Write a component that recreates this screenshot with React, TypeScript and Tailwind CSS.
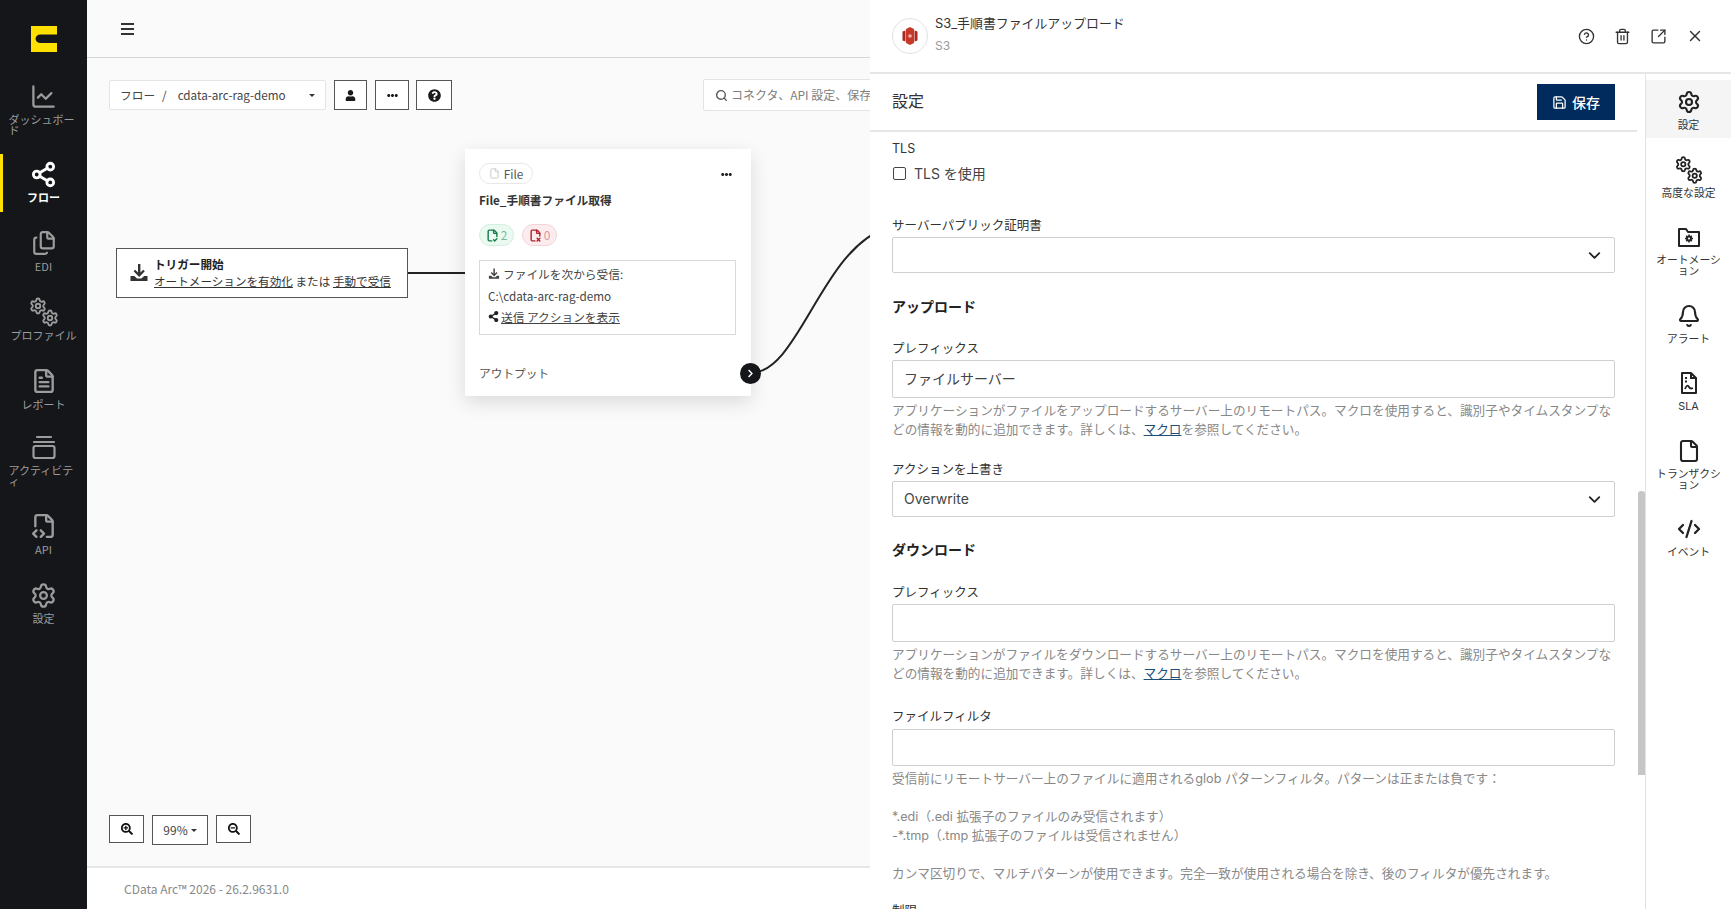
import {
  Bell,
  ChartLine,
  ChevronDown,
  CircleHelp,
  CodeXml,
  File,
  FileCheck2,
  FileCode2,
  FileText,
  FileX2,
  Files,
  Save,
  Search,
  Settings,
  Share2,
  SquareArrowOutUpRight,
  Trash2,
  X,
} from "lucide-react";
import type { ReactNode } from "react";
import {
  FaChevronRight,
  FaEllipsisH,
  FaQuestionCircle,
  FaSearchMinus,
  FaSearchPlus,
  FaShareAlt,
  FaUser,
} from "react-icons/fa";

function TwoGears({ className }: { className?: string }) {
  return (
    <span className={`relative block h-[30px] w-[30px] ${className ?? ""}`}>
      <Settings size={18} strokeWidth={2.5} className="absolute left-0 top-0" />
      <Settings size={18} strokeWidth={2.5} className="absolute bottom-0 right-0" />
    </span>
  );
}

function ActivityIcon() {
  return (
    <svg width="26" height="26" viewBox="0 0 26 26" fill="none" stroke="currentColor" strokeWidth="2.2">
      <path d="M6 3h14" strokeLinecap="round" />
      <path d="M3 8h20" strokeLinecap="round" />
      <rect x="2.5" y="12" width="21" height="12" rx="2" />
    </svg>
  );
}

function FolderGear() {
  return (
    <svg width="24" height="24" viewBox="0 0 24 24" fill="none" stroke="currentColor" strokeWidth="2">
      <path d="M2 4h7l2 3h11v14H2z" strokeLinejoin="round" />
      <path d="M12 9.500v8M8 13.500h8M9.200 10.700l5.600 5.600M14.800 10.700l-5.600 5.600" strokeWidth="1.500" />
      <circle cx="12" cy="13.500" r="3" fill="currentColor" stroke="none" />
      <circle cx="12" cy="13.500" r="1.100" fill="#fff" stroke="none" />
    </svg>
  );
}

function SlaFile() {
  return (
    <svg width="24" height="24" viewBox="0 0 24 24" fill="none" stroke="currentColor" strokeWidth="2">
      <path d="M5 2h9l5 5v15H5z" strokeLinejoin="round" />
      <path d="M14 2v5h5" />
      <path d="M8 7h2M8 10.500h2" />
      <path d="M8 18c1.500-4 3-4 4-2s2 2 4 1" strokeWidth="1.8" />
    </svg>
  );
}

function TrayDown({ size = 20 }: { size?: number }) {
  return (
    <svg width={size} height={size} viewBox="0 0 20 20" fill="currentColor">
      <path d="M9 1h2.400v8.500l2.800-2.800 1.600 1.600L10.200 14 4.600 8.300l1.600-1.600L9 9.500z" />
      <path d="M1.500 13h3.800l2.700 2.600h4.400L15.100 13h3.400v5H1.500z" />
    </svg>
  );
}

function S3Logo() {
  return (
    <svg width="16" height="20" viewBox="0 0 16 20">
      <path d="M4 3l4-2 4 2v14l-4 2-4-2z" fill="#c7382b" />
      <path d="M0.500 5.500l3-1v11l-3-1zM15.500 5.500l-3-1v11l3-1z" fill="#a8291e" />
      <circle cx="8" cy="10" r="1.800" fill="#eeb3ab" />
    </svg>
  );
}

const leftNav: { label: string; icon: ReactNode; active?: boolean; shift?: string }[] = [
  { label: "ダッシュボード", icon: <ChartLine size={27} strokeWidth={2} />, shift: "-mb-[2px]" },
  { label: "フロー", icon: <Share2 size={27} strokeWidth={2.5} />, active: true },
  { label: "EDI", icon: <Files size={26} strokeWidth={2} /> },
  { label: "プロファイル", icon: <TwoGears /> },
  { label: "レポート", icon: <FileText size={26} strokeWidth={2.2} />, shift: "-mb-[3px]" },
  { label: "アクティビティ", icon: <ActivityIcon />, shift: "-mb-[1px]" },
  { label: "API", icon: <FileCode2 size={26} strokeWidth={2.2} /> },
  { label: "設定", icon: <Settings size={27} strokeWidth={2} /> },
];

const rightNav: { label: string; icon: ReactNode; active?: boolean }[] = [
  { label: "設定", icon: <Settings size={24} strokeWidth={2.1} />, active: true },
  { label: "高度な設定", icon: <TwoGears className="scale-95" /> },
  { label: "オートメーション", icon: <FolderGear /> },
  { label: "アラート", icon: <Bell size={24} strokeWidth={2.1} /> },
  { label: "SLA", icon: <SlaFile /> },
  { label: "トランザクション", icon: <File size={24} strokeWidth={2.1} /> },
  { label: "イベント", icon: <CodeXml size={24} strokeWidth={2.3} /> },
];

function Sidebar() {
  return (
    <aside className="flex h-full w-[87px] shrink-0 flex-col bg-[#14161a] pt-[26px] text-[#9c9c9c]">
      <svg width="26" height="26" viewBox="0 0 26 26" className="mx-auto mb-[24px] shrink-0">
        <path d="M0 0h26v8.500H9.500c-3 0-5 2-5 4.250S6.500 17 9.500 17H26v9H0z" fill="#ffe000" />
      </svg>
      <nav className="flex flex-col gap-[11px]">
        {leftNav.map((item) => (
          <div
            key={item.label}
            className={`flex flex-col items-center border-l-[3px] pb-[9px] pt-[6px] ${
              item.active ? "border-[#ffe000] font-bold text-white" : "border-transparent"
            } ${item.shift ?? ""}`}
          >
            <span className="-ml-[3px] flex h-7 items-center justify-center">{item.icon}</span>
            <span className="-ml-[3px] mt-[4px] w-fit max-w-[70px] break-all text-[11px] leading-[11px]">{item.label}</span>
          </div>
        ))}
      </nav>
    </aside>
  );
}

function Toolbar() {
  return (
    <div className="flex h-[30px] items-center">
      <div className="flex h-[30px] w-[217px] items-center rounded-[2px] border border-[#e4e4e4] bg-white pl-[10px] pr-[10px] text-[11.700px] text-[#444]">
        <span>フロー</span>
        <span className="ml-[7px]">/</span>
        <span className="ml-[11px] flex-1">cdata-arc-rag-demo</span>
        <span className="h-0 w-0 border-x-[3px] border-t-[3px] border-x-transparent border-t-[#333]" />
      </div>
      <button className="ml-[8px] flex h-[30px] w-[33px] items-center justify-center border border-[#555] bg-white text-[#1a1a1a]">
        <FaUser size={11} />
      </button>
      <button className="ml-[8px] flex h-[30px] w-[34px] items-center justify-center border border-[#555] bg-white text-[#1a1a1a]">
        <FaEllipsisH size={11} />
      </button>
      <button className="ml-[7px] flex h-[30px] w-[36px] items-center justify-center border border-[#555] bg-white text-[#1a1a1a]">
        <FaQuestionCircle size={13} />
      </button>
      <div className="ml-[251px] flex h-[32px] w-[330px] shrink-0 items-center rounded-[2px] border border-[#e4e4e4] bg-white pl-[11px] text-[12px] text-[#808080]">
        <Search size={13} strokeWidth={2.6} className="mr-[3px] text-[#555]" />
        コネクタ、API 設定、保存されたフローを検索
      </div>
    </div>
  );
}

function TriggerNode() {
  return (
    <div className="absolute left-[29px] top-[190px] flex h-[50px] w-[292px] items-center border border-[#555] bg-white pl-[12px] text-[11.600px] text-[#333]">
      <TrayDown size={20} />
      <div className="ml-[5px] flex flex-col leading-[17px]">
        <span className="font-bold text-[#222]">トリガー開始</span>
        <span>
          <span className="underline">オートメーションを有効化</span> または <span className="underline">手動で受信</span>
        </span>
      </div>
    </div>
  );
}

function FileNode() {
  return (
    <div className="absolute left-[378px] top-[91px] flex h-[247px] w-[286px] flex-col bg-white pl-[14px] pr-[14px] pt-[14px] text-[11.700px] text-[#444] shadow-[0_6px_18px_rgba(0,0,0,0.13)]">
      <div className="flex items-center justify-between">
        <span className="flex h-[21px] w-[54px] items-center justify-center gap-[4px] rounded-full border border-[#e8e8e8] text-[#555]">
          <File size={11} className="text-[#c8c8c8]" />
          File
        </span>
        <FaEllipsisH size={11} className="mr-[5px] translate-y-[1px] text-[#222]" />
      </div>
      <div className="mt-[7px] font-bold leading-[18px] text-[#333]">File_手順書ファイル取得</div>
      <div className="mt-[15px] flex gap-[8px] text-[12px]">
        <span className="flex h-[22px] w-[35px] items-center justify-center gap-[2px] rounded-full border border-[#d5eee0] bg-[#eafaf1] text-[#7fb89a]">
          <FileCheck2 size={13} strokeWidth={2.6} className="text-[#147a46]" />2
        </span>
        <span className="flex h-[22px] w-[35px] items-center justify-center gap-[2px] rounded-full border border-[#f2d5d8] bg-[#fcecee] text-[#d59aa0]">
          <FileX2 size={13} strokeWidth={2.6} className="text-[#b3202f]" />0
        </span>
      </div>
      <div className="mt-[14px] flex h-[75px] w-[257px] flex-col gap-[2.500px] border border-[#d9d9d9] pl-[8px] pt-[3px] leading-[19px]">
        <span className="flex items-center gap-[3px]">
          <TrayDown size={12} />
          ファイルを次から受信:
        </span>
        <span>C:\cdata-arc-rag-demo</span>
        <span className="flex items-center gap-[2px]">
          <FaShareAlt size={11} className="text-[#222]" />
          <span className="underline">送信 アクションを表示</span>
        </span>
      </div>
      <div className="mt-[29px] leading-[18px] text-[#555]">アウトプット</div>
      <span className="absolute -right-[10px] bottom-[12px] flex h-[21px] w-[21px] items-center justify-center rounded-full bg-[#14161a] text-white">
        <FaChevronRight size={9} />
      </span>
    </div>
  );
}

function Canvas() {
  return (
    <div className="relative flex flex-1 flex-col justify-between overflow-hidden bg-[#fafafa] px-[22px] pb-[21px] pt-[22px]">
      <Toolbar />
      <svg className="pointer-events-none absolute inset-0 h-full w-full" fill="none" stroke="#222" strokeWidth="2">
        <path d="M320 215H380" />
        <path d="M664 315C712 315 735 190 800 170" />
      </svg>
      <TriggerNode />
      <FileNode />
      <div className="flex items-start gap-[8px] text-[12px] text-[#444]">
        <button className="flex h-[28px] w-[35px] items-center justify-center border border-[#555] bg-white text-[#111]">
          <FaSearchPlus size={12} />
        </button>
        <button className="flex h-[30px] w-[56px] items-center justify-center gap-[3px] border border-[#555] bg-white">
          99%
          <span className="h-0 w-0 border-x-[3px] border-t-[3px] border-x-transparent border-t-[#333]" />
        </button>
        <button className="flex h-[28px] w-[35px] items-center justify-center border border-[#555] bg-white text-[#111]">
          <FaSearchMinus size={12} />
        </button>
      </div>
    </div>
  );
}

function FieldLabel({ children, className }: { children: ReactNode; className?: string }) {
  return <div className={`text-[12.500px] leading-[18px] text-[#333] ${className ?? ""}`}>{children}</div>;
}

function TextBox({ value, className }: { value?: string; className?: string }) {
  return (
    <div className={`flex items-center rounded-[2px] border border-[#cfcfcf] bg-white pb-[1px] pl-[11px] text-[14px] text-[#444] ${className ?? ""}`}>
      {value}
    </div>
  );
}

function SelectBox({ value, className }: { value?: string; className?: string }) {
  return (
    <div className={`flex h-9 items-center justify-between rounded-[2px] border border-[#cfcfcf] bg-white pl-[11px] pr-[10px] text-[14px] text-[#444] ${className ?? ""}`}>
      <span className="-translate-y-[1px]">{value}</span>
      <ChevronDown size={19} strokeWidth={2.3} className="text-[#222]" />
    </div>
  );
}

function Help({ action }: { action: string }) {
  return (
    <p className="mt-[3px] text-[12.650px] leading-[19px] text-[#888]">
      アプリケーションがファイルを{action}するサーバー上のリモートパス。マクロを使用すると、識別子やタイムスタンプなどの情報を動的に追加できます。詳しくは、
      <span className="text-[#1d4f7a] underline">マクロ</span>を参照してください。
    </p>
  );
}

function Form() {
  return (
    <div className="min-h-0 flex-1 overflow-hidden pl-[22px] pr-[22px] pt-[8px]">
      <FieldLabel>TLS</FieldLabel>
      <label className="mt-[5px] flex h-5 items-center gap-[8px] text-[14px] text-[#444]">
        <span className="ml-[1px] h-[13px] w-[13px] rounded-[2px] border-[1.500px] border-[#444]" />
        TLS を使用
      </label>
      <FieldLabel className="mt-[34px]">サーバーパブリック証明書</FieldLabel>
      <SelectBox className="mt-[2px]" />
      <h3 className="mt-[24px] text-[14px] font-bold leading-[20px] text-[#222]">アップロード</h3>
      <FieldLabel className="mt-[23px]">プレフィックス</FieldLabel>
      <TextBox value="ファイルサーバー" className="mt-[2px] h-[38px]" />
      <Help action="アップロード" />
      <FieldLabel className="mt-[22px]">アクションを上書き</FieldLabel>
      <SelectBox value="Overwrite" className="mt-[2px]" />
      <h3 className="mt-[23px] text-[14px] font-bold leading-[20px] text-[#222]">ダウンロード</h3>
      <FieldLabel className="mt-[24px]">プレフィックス</FieldLabel>
      <TextBox className="mt-[2px] h-[38px]" />
      <Help action="ダウンロード" />
      <FieldLabel className="mt-[25px]">ファイルフィルタ</FieldLabel>
      <TextBox className="mt-[3px] h-[37px]" />
      <div className="mt-[3px] text-[12.650px] leading-[19px] text-[#888]">
        <p>受信前にリモートサーバー上のファイルに適用されるglob パターンフィルタ。パターンは正または負です：</p>
        <p className="mt-[19px]">*.edi（.edi 拡張子のファイルのみ受信されます）</p>
        <p>-*.tmp（.tmp 拡張子のファイルは受信されません）</p>
        <p className="mt-[19px]">カンマ区切りで、マルチパターンが使用できます。完全一致が使用される場合を除き、後のフィルタが優先されます。</p>
      </div>
      <FieldLabel className="mt-[19px]">制限</FieldLabel>
    </div>
  );
}

function Panel() {
  return (
    <section className="absolute bottom-0 right-0 top-0 z-10 flex w-[861px] flex-col bg-white font-['Inter','Noto_Sans_CJK_JP',sans-serif]">
      <header className="flex h-[74px] shrink-0 items-center border-b-2 border-[#e6e6e6] pl-[22px] pr-[27px]">
        <span className="flex h-9 w-9 items-center justify-center rounded-full border border-[#e2e2e2]">
          <S3Logo />
        </span>
        <div className="ml-[7px] flex-1 self-start pt-[15px]">
          <div className="text-[12.900px] leading-[18px] text-[#333]">S3_手順書ファイルアップロード</div>
          <div className="mt-[4px] text-[12px] leading-[18px] text-[#999]">S3</div>
        </div>
        <div className="flex items-center gap-[19px] text-[#333]">
          <CircleHelp size={17} strokeWidth={1.9} />
          <Trash2 size={17} strokeWidth={1.9} />
          <SquareArrowOutUpRight size={17} strokeWidth={1.9} />
          <X size={18} strokeWidth={1.9} />
        </div>
      </header>
      <div className="flex min-h-0 flex-1">
        <div className="flex w-[767px] flex-col">
          <div className="flex h-[58px] shrink-0 items-center justify-between border-b-2 border-[#e6e6e6] pl-[22px] pr-[22px]">
            <h2 className="-translate-y-[1px] text-[16px] text-[#333]">設定</h2>
            <button className="flex h-9 w-[78px] items-center justify-center gap-[5px] bg-[#002b5c] text-[14px] font-medium text-white">
              <Save size={15} strokeWidth={2} />
              保存
            </button>
          </div>
          <Form />
        </div>
        <div className="w-2 shrink-0">
          <div className="ml-[1px] mt-[417px] h-[284px] w-[7px] rounded-t-[3px] bg-[#c6c6c6]" />
        </div>
        <nav className="flex flex-1 flex-col gap-[9.500px] border-l border-[#e2e2e2] pt-[6px]">
          {rightNav.map((item) => (
            <div
              key={item.label}
              className={`flex flex-col items-center pb-[7px] pt-[10px] text-[#222] ${item.active ? "bg-[#f5f5f5]" : ""}`}
            >
              <span className="flex h-6 items-center justify-center">{item.icon}</span>
              <span className="mt-[6px] w-[66px] break-all text-center text-[10.800px] leading-[11px] text-[#333] [line-break:anywhere]">
                {item.label}
              </span>
            </div>
          ))}
        </nav>
      </div>
    </section>
  );
}

export default function App() {
  return (
    <div className="flex h-[909px] w-[1731px] overflow-hidden bg-white font-['Noto_Sans_CJK_JP',sans-serif]">
      <Sidebar />
      <main className="relative flex min-w-0 flex-1 flex-col">
        <div className="flex h-[58px] shrink-0 items-center border-b border-[#d6d6d6] bg-[#fafafa] pl-[34px] text-[#333]">
          <div className="flex w-[13px] flex-col gap-[3px]">
            <span className="h-[2px] bg-[#333]" />
            <span className="h-[2px] bg-[#333]" />
            <span className="h-[2px] bg-[#333]" />
          </div>
        </div>
        <Canvas />
        <footer className="flex h-[43px] shrink-0 items-center border-t-2 border-[#e6e6e6] bg-white pl-[37px] text-[12px] text-[#888]">
          CData Arc™ 2026 - 26.2.9631.0
        </footer>
      </main>
      <Panel />
    </div>
  );
}
